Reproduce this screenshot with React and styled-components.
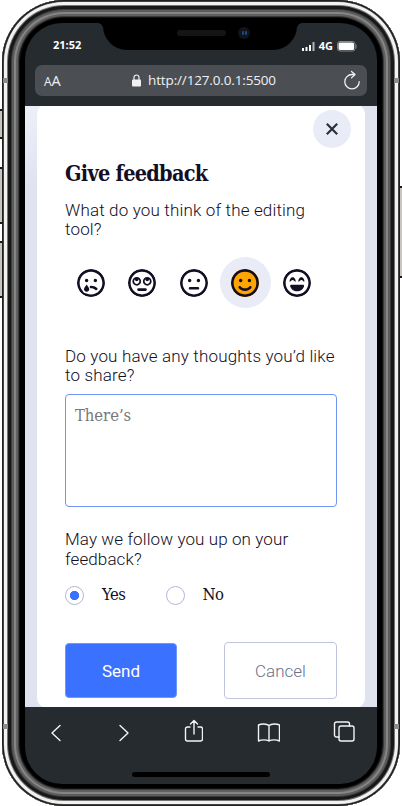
import React, { useState } from "react";
import styled, { createGlobalStyle } from "styled-components";
import {
  FaRegFaceSadTear,
  FaRegFaceRollingEyes,
  FaRegFaceMeh,
  FaRegFaceSmile,
  FaRegFaceLaughBeam,
} from "react-icons/fa6";

const GlobalStyle = createGlobalStyle`
  *, *::before, *::after { box-sizing: border-box; }
  body { margin: 0; background: #fff; overflow: hidden; }
  button { font: inherit; padding: 0; cursor: pointer; }
`;

const sans = `Roboto, "Open Sans", sans-serif`;
const serif = `"DejaVu Serif Condensed", "DejaVu Serif", serif`;
const system = `"Open Sans", "Noto Sans", sans-serif`;

const Stage = styled.div`
  position: relative;
  width: 402px;
  height: 806px;
  padding: 0 2px;
  overflow: hidden;
`;

const Phone = styled.div`
  position: relative;
  height: 806px;
  padding: 23px 23px 22px;
  border-radius: 62px;
  background: #000;
  box-shadow:
    inset 0 0 0 1.5px #1f201f,
    inset 0 0 0 2px #6a6a68,
    inset 0 0 0 5px #f2f2f0,
    inset 0 0 0 6px #747474,
    inset 0 0 0 9px #171918,
    inset 0 0 0 10px #3c3c3c,
    inset 0 0 0 12px #5c5c5c,
    inset 0 0 0 14px #858585,
    inset 0 0 0 16px #606060,
    inset 0 0 0 17px #393939,
    inset 0 0 0 18px #111;
`;

const SideKey = styled.div`
  position: absolute;
  top: ${(p) => p.$top}px;
  ${(p) => p.$side}: 0;
  width: 3px;
  height: ${(p) => p.$height}px;
  border: solid #171717;
  border-width: 2px 0;
  background: #c9c5c1;
`;

const AntennaBand = styled.div`
  position: absolute;
  top: ${(p) => p.$top}px;
  ${(p) => p.$side}: 3px;
  width: 5px;
  height: 5px;
  background: #8c8c8a;
`;

const Screen = styled.div`
  position: relative;
  display: flex;
  flex-direction: column;
  height: 761px;
  border-radius: 37px;
  overflow: hidden;
  background: #262b2f;
`;

const Notch = styled.div`
  position: absolute;
  top: 0;
  left: 78px;
  width: 194px;
  height: 27px;
  border-radius: 0 0 24px 24px;
  background: #000;
  &::before, &::after {
    content: "";
    position: absolute;
    top: 0;
    width: 5px;
    height: 5px;
  }
  &::before { left: -5px; background: radial-gradient(circle at 0 100%, transparent 4.5px, #000 5px); }
  &::after { right: -5px; background: radial-gradient(circle at 100% 100%, transparent 4.5px, #000 5px); }
`;

const Speaker = styled.div`
  position: absolute;
  left: 74px;
  top: 7px;
  width: 49px;
  height: 6px;
  border-radius: 3px;
  background: #151515;
`;

const Camera = styled.div`
  position: absolute;
  left: 135px;
  top: 4px;
  display: flex;
  align-items: center;
  justify-content: center;
  gap: 1px;
  width: 12px;
  height: 12px;
  border-radius: 50%;
  background: #11141a;
  &::before, &::after {
    content: "";
    width: 2px;
    height: 4px;
    border-radius: 1px;
    background: #164b87;
  }
`;

const StatusBar = styled.div`
  display: flex;
  justify-content: space-between;
  height: 42px;
  padding: 13px 20px 0 28px;
  color: #fff;
  font: 700 11px/18px ${system};
`;

const Signals = styled.div`
  display: flex;
  align-items: center;
  gap: 4px;
  height: 20px;
  svg { display: block; }
`;

const AddressBar = styled.div`
  display: flex;
  align-items: center;
  justify-content: space-between;
  height: 31px;
  margin: 0 10px 10px;
  padding: 0 7px 0 9px;
  border-radius: 7px;
  background: #4b4e53;
  color: #f1f1f1;
  font: 400 13.5px/31px ${system};
`;

const TextSize = styled.span`
  width: 20px;
  font-size: 14.5px;
  letter-spacing: -0.2px;
  small { font-size: 12px; }
`;

const Address = styled.span`
  display: flex;
  align-items: center;
  gap: 7px;
  letter-spacing: -0.15px;
`;

const Page = styled.main`
  flex: none;
  height: 601px;
  padding: 0 12px;
  background: linear-gradient(165deg, #edf0f8 0, #dfe3ef 80px, #dfe3ef 100%);
  overflow: hidden;
`;

const Card = styled.form`
  height: 604px;
  margin-top: -2px;
  padding: 6px 28px 0;
  border-radius: 10px;
  background: #fff;
  color: #120e24;
`;

const CloseButton = styled.button`
  display: flex;
  align-items: center;
  justify-content: center;
  width: 38px;
  height: 38px;
  margin: 0 -14px 0 auto;
  border: 0;
  border-radius: 50%;
  background: #e9ecf6;
  color: #28303d;
`;

const Title = styled.h1`
  height: 30px;
  margin: 10px 0 13px;
  font: 700 21.5px/31px ${serif};
  letter-spacing: -0.72px;
  white-space: nowrap;
`;

const Question = styled.p`
  height: 39px;
  margin: 0;
  font: 300 17px/${(p) => p.$leading || 19}px ${sans};
  white-space: nowrap;
  letter-spacing: ${(p) => p.$spacing}px;
  span { display: block; }
`;

const Ratings = styled.div`
  display: flex;
  gap: 0.5px;
  height: 51px;
  margin: 17px 0 39px;
`;

const Rating = styled.button`
  flex: none;
  display: flex;
  align-items: center;
  justify-content: center;
  width: 51px;
  height: 51px;
  border: 0;
  border-radius: 50%;
  background: ${(p) => (p.$selected ? "#e9ecf6" : "transparent")};
  color: #120e24;
  svg {
    width: 28px;
    height: 28px;
    border-radius: 50%;
    background: ${(p) => (p.$selected ? "#ffa500" : "transparent")};
  }
`;

const Thoughts = styled.textarea`
  display: block;
  width: 272px;
  height: 113px;
  margin: 8px 0 22px;
  padding: 10px 9px;
  border: 1px solid #6f94f5;
  border-radius: 4px;
  outline: 0;
  resize: none;
  font: 400 16.5px/22px ${serif};
  letter-spacing: -0.05px;
  &::placeholder { color: #777; opacity: 1; }
`;

const Choices = styled.div`
  display: flex;
  height: 24px;
  margin: 14px 0 36px;
`;

const Choice = styled.label`
  display: flex;
  align-items: center;
  gap: 18px;
  width: 100.5px;
  font: 400 16.5px/20px ${serif};
  letter-spacing: -0.4px;
  span { padding-top: 1px; }
`;

const Radio = styled.input`
  appearance: none;
  flex: none;
  width: 19px;
  height: 19px;
  margin: 2px 0 0;
  border: 1.5px solid #b2b8d0;
  border-radius: 50%;
  background: #fff;
  &:checked { background: radial-gradient(circle, #3b71ff 4.3px, #fff 5px); }
`;

const Actions = styled.div`
  display: flex;
  align-items: center;
  justify-content: space-between;
  height: 57px;
`;

const Action = styled.button`
  width: ${(p) => (p.$primary ? 112 : 113)}px;
  height: ${(p) => (p.$primary ? 55 : 57)}px;
  border: 1px solid ${(p) => (p.$primary ? "#6f96ff" : "#bfc4dc")};
  border-radius: 4px;
  background: ${(p) => (p.$primary ? "#3b71ff" : "#fff")};
  color: ${(p) => (p.$primary ? "#fff" : "#69718f")};
  font: ${(p) => (p.$primary ? 400 : 300)} 17px/20px ${sans};
`;

const Toolbar = styled.nav`
  position: relative;
  flex: 1;
  display: flex;
  justify-content: space-between;
  padding: 10px 22px 0 24px;
  color: #f4f4f4;
`;

const Tool = styled.svg`
  width: ${(p) => p.$width}px;
  height: 28px;
  fill: none;
  stroke: currentColor;
  stroke-width: 1.4;
  stroke-linecap: round;
  stroke-linejoin: round;
`;

const HomeIndicator = styled.div`
  position: absolute;
  left: 107px;
  top: 65px;
  width: 138px;
  height: 5px;
  border-radius: 3px;
  background: #000;
`;

const moods = [
  ["Very unhappy", FaRegFaceSadTear],
  ["Unimpressed", FaRegFaceRollingEyes],
  ["Neutral", FaRegFaceMeh],
  ["Happy", FaRegFaceSmile],
  ["Delighted", FaRegFaceLaughBeam],
];

export default function App() {
  const [mood, setMood] = useState(3);
  const [followUp, setFollowUp] = useState("Yes");

  return (
    <>
      <GlobalStyle />
      <Stage>
        <SideKey $side="left" $top={109} $height={30} />
        <SideKey $side="left" $top={167} $height={57} />
        <SideKey $side="left" $top={241} $height={57} />
        <SideKey $side="right" $top={186} $height={92} />
        <Phone>
          <Screen>
            <StatusBar>
              <span>21:52</span>
              <Signals>
                <svg width="13" height="9" fill="#fff">
                  <path d="M0 6h2v3H0zM3.500 5h2v4h-2zM7 3h2v6H7z" />
                  <path d="M10.500 0h2v9h-2z" fill="#b4b6b8" />
                </svg>
                <span>4G</span>
                <svg width="20" height="11" fill="none">
                  <rect x=".5" y=".5" width="17.500" height="9.500" rx="2.500" stroke="#85888a" />
                  <rect x="1.500" y="1.500" width="15.500" height="7.500" rx="1.500" fill="#fff" />
                  <path d="M19 3.500v4" stroke="#85888a" />
                </svg>
              </Signals>
            </StatusBar>
            <AddressBar>
              <TextSize><small>A</small>A</TextSize>
              <Address>
                <svg width="9" height="13" viewBox="0 0 9 13" fill="none">
                  <path d="M2 6V3.500a2.500 2.500 0 0 1 5 0V6" stroke="#f1f1f1" strokeWidth="1.200" />
                  <rect y="5.500" width="9" height="7" rx="1" fill="#f1f1f1" />
                </svg>
                http://127.0.0.1:5500
              </Address>
              <svg width="16" height="22" viewBox="0 0 16 22" fill="none" stroke="#f1f1f1" strokeWidth="1.300" strokeLinecap="round" strokeLinejoin="round">
                <path d="M10.500 4.500H8a7.200 7.200 0 1 0 7.200 7.200M7.500 1.500l3.500 3-3.500 3.400" />
              </svg>
            </AddressBar>

            <Page>
              <Card onSubmit={(e) => e.preventDefault()}>
                <CloseButton type="button" aria-label="Close">
                  <svg width="12" height="12" fill="none" stroke="currentColor" strokeWidth="2.200">
                    <path d="m.8.8 10.400 10.400m0-10.400L.8 11.200" />
                  </svg>
                </CloseButton>
                <Title>Give feedback</Title>
                <Question $spacing={0.16}><span>What do you think of the editing</span><span>tool?</span></Question>
                <Ratings>
                  {moods.map(([label, Icon], i) => (
                    <Rating key={label} type="button" aria-label={label} $selected={mood === i} onClick={() => setMood(i)}>
                      <Icon />
                    </Rating>
                  ))}
                </Ratings>
                <Question $spacing={0.16}><span>Do you have any thoughts you’d like</span><span>to share?</span></Question>
                <Thoughts placeholder="There’s" />
                <Question $spacing={0.1} $leading={20}><span>May we follow you up on your</span><span>feedback?</span></Question>
                <Choices>
                  {["Yes", "No"].map((option) => (
                    <Choice key={option}>
                      <Radio type="radio" name="follow-up" checked={followUp === option} onChange={() => setFollowUp(option)} />
                      <span>{option}</span>
                    </Choice>
                  ))}
                </Choices>
                <Actions>
                  <Action $primary>Send</Action>
                  <Action type="button">Cancel</Action>
                </Actions>
              </Card>
            </Page>

            <Toolbar>
              <Tool $width={14} viewBox="0 0 14 28"><path d="M11 8.500 3 16l8 7.500" /></Tool>
              <Tool $width={14} viewBox="0 0 14 28"><path d="m4 8.500 8 7.500-8 7.500" /></Tool>
              <Tool $width={20} viewBox="-1 0 20 28"><path d="M6 10H3.500a2 2 0 0 0-2 2v10a2 2 0 0 0 2 2h13a2 2 0 0 0 2-2V12a2 2 0 0 0-2-2H14M10 17V3.500M6.500 7 10 3.500 13.500 7" /></Tool>
              <Tool $width={24} viewBox="-1 0 24 28"><path d="M12 8.500C9.500 6.500 4.500 6.500 1.500 8v16c3-1.500 8-1.500 10.500 0 2.500-1.500 7.500-1.500 10.500 0V8c-3-1.500-8-1.500-10.500.5Zm0 0V24" /></Tool>
              <Tool $width={22} viewBox="0 0 22 28"><rect x="6" y="9" width="15" height="15" rx="2" /><path d="M6 20H3.500a2 2 0 0 1-2-2V7a2 2 0 0 1 2-2h11a2 2 0 0 1 2 2v2" /></Tool>
              <HomeIndicator />
            </Toolbar>
            <Notch><Speaker /><Camera /></Notch>
          </Screen>
        </Phone>
        <AntennaBand $side="left" $top={78} />
        <AntennaBand $side="right" $top={78} />
        <AntennaBand $side="left" $top={724} />
        <AntennaBand $side="right" $top={724} />
      </Stage>
    </>
  );
}
